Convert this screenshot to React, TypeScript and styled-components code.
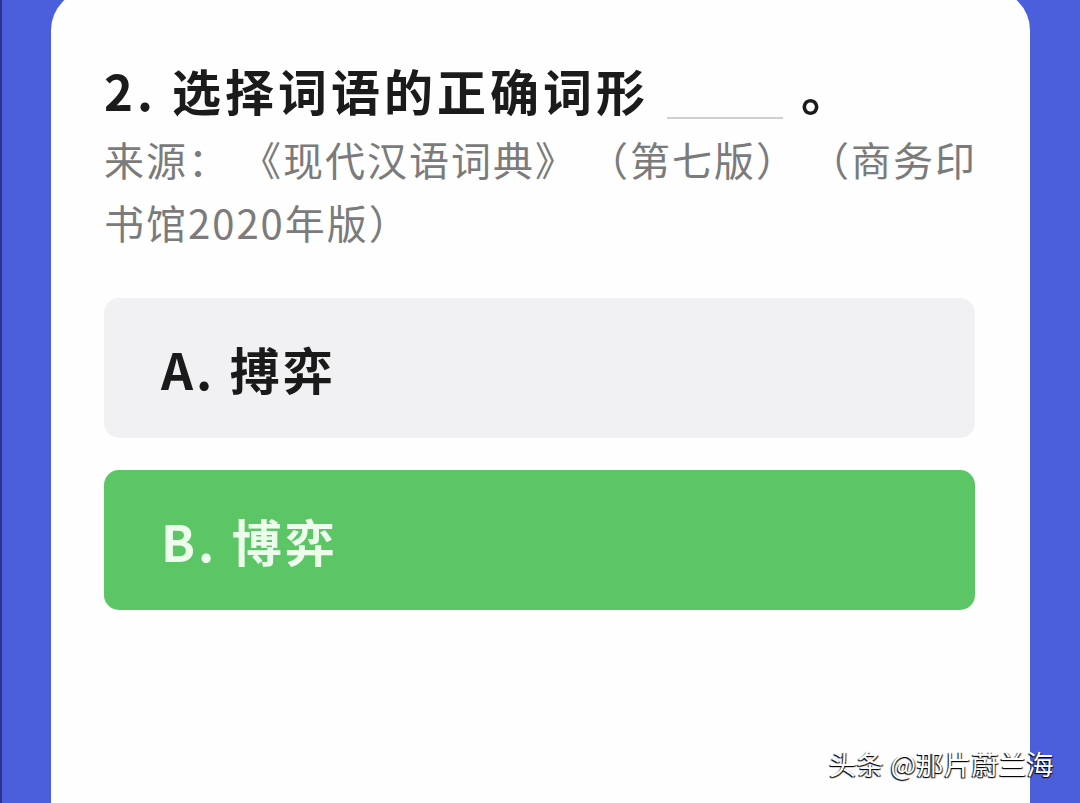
import styled, { createGlobalStyle } from "styled-components";

const GlobalStyle = createGlobalStyle`
  html, body {
    margin: 0;
    padding: 0;
    height: 100%;
    overflow: hidden;
  }
  body {
    background: #4b5fdc;
    font-family: "Noto Sans CJK SC", "Noto Sans", sans-serif;
  }
`;

const Screen = styled.section`
  position: relative;
  height: 803px;
  padding: 0 50px 0 51px;
  box-shadow: inset 2px 0 0 #2a3590;
  box-sizing: border-box;
  overflow: hidden;
`;

const Card = styled.div`
  margin-top: -10px;
  height: 860px;
  background: #fefefe;
  border-radius: 40px;
  padding: 70px 55px 0 53px;
  box-sizing: border-box;
`;

const Title = styled.h1`
  margin: 0;
  font-size: 49px;
  line-height: 60px;
  font-weight: 700;
  color: #1b1b1b;
  letter-spacing: 4px;
  display: flex;
  align-items: flex-end;
  white-space: nowrap;
`;

const Blank = styled.span`
  display: inline-block;
  width: 116px;
  height: 1px;
  margin: 0 18px 0 18px;
  border-bottom: 2px solid #cfcfcf;
  transform: translateY(-1px);
`;

const Source = styled.p`
  margin: 8px -12px 0 0;
  font-size: 40px;
  line-height: 63px;
  color: #7b7b7b;
  letter-spacing: 2px;
`;

const Options = styled.div`
  margin-top: 44px;
  display: flex;
  flex-direction: column;
  gap: 32px;
`;

const Option = styled.div<{ $picked?: boolean }>`
  height: 140px;
  border-radius: 15px;
  background: ${(p) => (p.$picked ? "#5cc566" : "#f1f1f3")};
  color: ${(p) => (p.$picked ? "#ecfdec" : "#1a1a1a")};
  display: flex;
  align-items: center;
  padding-left: 57px;
  font-size: 50px;
  font-weight: 700;
  letter-spacing: 3px;
`;

const Watermark = styled.div`
  position: absolute;
  right: 26px;
  bottom: 20px;
  font-size: 27px;
  color: #ffffff;
  text-shadow: -1px 1px 1px #000, 1px 1px 1px #222;
  letter-spacing: 0.5px;
`;

export default function App() {
  return (
    <>
      <GlobalStyle />
      <Screen>
        <Card>
          <Title>
            2. 选择词语的正确词形
            <Blank />。
          </Title>
          <Source>来源： 《现代汉语词典》 （第七版） （商务印书馆2020年版）</Source>
          <Options>
            <Option>A. 搏弈</Option>
            <Option $picked>B. 博弈</Option>
          </Options>
        </Card>
        <Watermark>头条 @那片蔚兰海</Watermark>
      </Screen>
    </>
  );
}
